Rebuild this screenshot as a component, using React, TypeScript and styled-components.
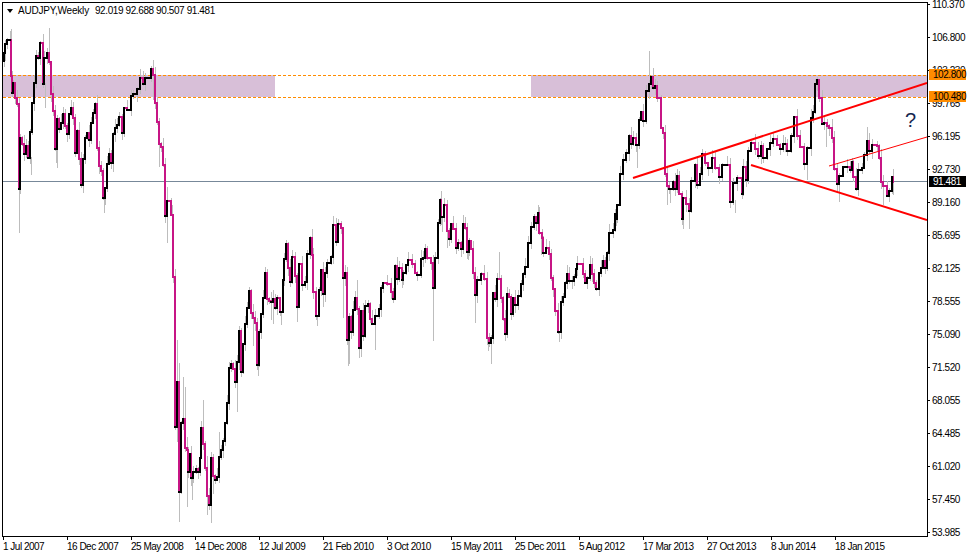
import React from "react";
import styled, { createGlobalStyle } from "styled-components";

const GlobalStyle = createGlobalStyle`
  html, body {
    margin: 0;
    background: #ffffff;
  }
`;

// close levels read off the chart, grouped by the crop they were measured in
type Point = [number, number];
interface Segment {
  ox: number;
  oy: number;
  pts: Point[];
}

const segments: Segment[] = [
  {
    ox: 0,
    oy: 0,
    pts: [
      [8, 180], [8, 155], [14, 130], [22, 118], [30, 118], [32, 225], [35, 275], [40, 245], [46, 290], [52, 310],
      [56, 565], [61, 410], [67, 430], [73, 460], [78, 435], [84, 470], [90, 392], [96, 305], [102, 245], [108, 165],
      [114, 172], [120, 125], [128, 248], [133, 170], [140, 155], [146, 182], [152, 280], [158, 330], [164, 445],
      [170, 355], [176, 385], [184, 365], [190, 338], [196, 375], [202, 398], [208, 340], [214, 320], [220, 350],
      [226, 455], [232, 390], [238, 475], [244, 553], [250, 475], [256, 410], [262, 395], [268, 418], [274, 365],
      [280, 335], [286, 310], [292, 440], [298, 495], [304, 510], [310, 592], [316, 560], [322, 488], [328, 458],
      [334, 485], [338, 400], [344, 380], [352, 372], [358, 348], [366, 395], [372, 322], [380, 328], [392, 285],
      [400, 278], [412, 265], [420, 232], [428, 250], [436, 232], [452, 203], [458, 222], [465, 305], [470, 362],
      [476, 428], [482, 438], [488, 492], [494, 645], [500, 600], [512, 642], [518, 828],
    ],
  },
  {
    ox: 0,
    oy: 274,
    pts: [
      [524, 455], [530, 322], [536, 650], [542, 445], [550, 432], [554, 520], [560, 525], [564, 592], [570, 538],
      [574, 610], [580, 592], [588, 582], [594, 590], [600, 550], [604, 460], [610, 508], [616, 578], [622, 662],
      [628, 690], [634, 550], [640, 602], [646, 615], [652, 605], [658, 545], [664, 525], [668, 497], [676, 445],
      [682, 385], [688, 280], [694, 268], [700, 282], [706, 322], [712, 260], [718, 168], [724, 292], [730, 208],
      [736, 148], [742, 98], [748, 48], [752, 115], [758, 130], [764, 145], [770, 270], [776, 172], [784, 118],
      [790, 70], [796, -5], [800, 72], [806, 78], [812, 82], [818, 72], [826, 98], [832, 70], [840, 112], [848, 15],
    ],
  },
  {
    ox: 0,
    oy: 0,
    pts: [
      [852, 775], [858, 730], [864, 800], [870, 842], [876, 768], [884, 825], [890, 917], [896, 790], [906, 852],
      [916, 844], [922, 760], [930, 710], [936, 762], [940, 872], [948, 944], [956, 867],
    ],
  },
  {
    ox: 320,
    oy: 140,
    pts: [
      [2, 388], [8, 458], [14, 395], [22, 367], [32, 347], [40, 252], [48, 302], [54, 248], [62, 260], [70, 412],
      [76, 395], [80, 598], [86, 528], [92, 572], [98, 508], [106, 472], [112, 505], [118, 622], [124, 510], [130, 585],
      [136, 495], [144, 490], [150, 535], [156, 548], [166, 525], [176, 505], [184, 442], [190, 425], [200, 430],
      [212, 452], [218, 475], [224, 375], [230, 413], [238, 382], [245, 418], [250, 395], [258, 372], [265, 358],
      [275, 370], [285, 395], [292, 402], [302, 355], [310, 350], [316, 325], [322, 352], [332, 365], [340, 442],
      [346, 352], [354, 245], [360, 178], [364, 228], [372, 192], [380, 270], [386, 295], [392, 248], [400, 265],
      [408, 320], [415, 307], [422, 325], [430, 250], [436, 262], [442, 332], [448, 300], [454, 325], [460, 395],
      [466, 462], [472, 418], [482, 398], [492, 415], [500, 592], [506, 605], [514, 590], [520, 455], [526, 475],
      [532, 415], [542, 470], [550, 535], [556, 578], [562, 458], [568, 468], [574, 518], [580, 472], [586, 492],
      [594, 465], [604, 428], [610, 400], [616, 378], [624, 305], [634, 257], [642, 228], [648, 245], [654, 215],
      [658, 275], [665, 290], [670, 335], [678, 320], [686, 338], [692, 412], [698, 445], [705, 510], [715, 572],
      [722, 482], [730, 468], [736, 425], [742, 400], [748, 420], [755, 420], [762, 408], [768, 385], [772, 368],
      [788, 398], [795, 425], [802, 412], [810, 372], [815, 400], [822, 425], [828, 445], [836, 395],
    ],
  },
  {
    ox: 600,
    oy: 40,
    pts: [
      [2, 680], [8, 660], [14, 680], [20, 635], [26, 575], [38, 568], [44, 518], [48, 535], [52, 492], [60, 400],
      [70, 358], [78, 335], [86, 285], [92, 310], [100, 290], [108, 312], [116, 238], [122, 212], [130, 240], [138, 150],
      [146, 130], [152, 108], [158, 140], [165, 135], [172, 172], [182, 262], [190, 275], [195, 400], [202, 435],
      [208, 445], [218, 422], [224, 445], [232, 405], [238, 460], [245, 535], [250, 470], [258, 490], [266, 510],
      [272, 420], [285, 372], [292, 432], [300, 400], [306, 340], [315, 365], [325, 382], [335, 350], [345, 380],
      [358, 408], [365, 372], [380, 372], [390, 482], [400, 425], [410, 412], [425, 458], [430, 378], [437, 418],
      [445, 330], [452, 305], [465, 325], [475, 345], [482, 315], [490, 350], [500, 325], [510, 305], [520, 295],
      [530, 312], [540, 325], [548, 308], [555, 308], [562, 330], [572, 285], [582, 228], [590, 285], [600, 318],
      [612, 368], [622, 322], [632, 232], [640, 212], [645, 130], [650, 118], [656, 172], [665, 250], [672, 245],
      [680, 255], [688, 262], [696, 292], [703, 385], [710, 428], [718, 405], [728, 378], [740, 378], [750, 388],
      [755, 362], [760, 408], [768, 445], [775, 388], [785, 380], [792, 342], [800, 300], [808, 330], [815, 312],
      [830, 315], [838, 350], [844, 422], [850, 435], [860, 465], [868, 450], [875, 408], [880, 424],
    ],
  },
];

// the long wicks that stand out: x, top, bottom
const longWicks: number[][] = [
  [11, 29, 50], [19, 120, 233], [31, 157, 175], [45, 83, 108], [49, 28, 55], [56, 148, 163], [57, 148, 168],
  [104, 197, 213], [113, 162, 172], [153, 60, 100], [159, 135, 167], [167, 187, 243], [172, 205, 267],
  [177, 340, 442], [179, 363, 522], [183, 377, 420], [185, 387, 417], [187, 437, 507], [192, 474, 500],
  [203, 400, 427], [207, 456, 515], [211, 504, 523], [213, 457, 494], [219, 432, 467], [237, 381, 412],
  [253, 317, 346], [258, 364, 376], [271, 297, 320], [273, 290, 324], [281, 311, 325], [297, 306, 322],
  [317, 315, 326], [323, 293, 307], [343, 277, 318], [348, 340, 366], [349, 330, 364], [357, 280, 297],
  [359, 347, 358], [361, 347, 357], [375, 323, 350], [433, 287, 341], [441, 195, 215], [442, 217, 232],
  [447, 230, 248], [468, 250, 260], [475, 294, 323], [488, 342, 351], [491, 342, 364], [499, 252, 278],
  [505, 332, 339], [541, 237, 255], [559, 331, 342], [637, 144, 168], [649, 51, 76], [667, 185, 205],
  [670, 190, 203], [683, 215, 229], [689, 212, 229], [735, 200, 213], [807, 163, 180], [826, 127, 147],
  [839, 183, 202], [867, 127, 142], [883, 185, 205], [889, 195, 202], [893, 170, 195],
];

const bodyPaths = () => {
  let black = "";
  let pink = "";
  let wicks = "";
  let prevX = 0;
  let prevY = 0;
  let first = true;
  let n = 0;
  segments.forEach((seg) => {
    seg.pts.forEach(([zx, zy]) => {
      // readings are bar centres, bodies are 2px wide
      const x = Math.max(Math.round(seg.ox + zx / 3) - 1, 3);
      const y = Math.round(seg.oy + zy / 3);
      if (first) {
        prevX = x;
        prevY = y;
        first = false;
      }
      const top = Math.min(prevY, y);
      const h = Math.abs(prevY - y) + 2;
      const bar = `M${x} ${top}h2v${h}h-2zM${prevX} ${prevY}h${Math.max(x - prevX, 0)}v2h${-Math.max(x - prevX, 0)}z`;
      if (y <= prevY) black += bar;
      else pink += bar;
      n += 1;
      const up = (n * 7) % 9;
      const down = (n * 5) % 8;
      wicks += `M${x + 1} ${top - up}V${top + h + down}`;
      prevX = x;
      prevY = y;
    });
  });
  longWicks.forEach(([x, a, b]) => {
    wicks += `M${x} ${a}V${b}`;
  });
  return { black, pink, wicks };
};

const { black, pink, wicks } = bodyPaths();

const prices = [
  "110.370", "106.800", "103.230", "99.765", "96.195", "92.730", "89.160", "85.695", "82.125",
  "78.555", "75.090", "71.520", "68.055", "64.485", "61.020", "57.450", "53.985",
];

const dates = [
  "1 Jul 2007", "16 Dec 2007", "25 May 2008", "14 Dec 2008", "12 Jul 2009", "21 Feb 2010", "3 Oct 2010",
  "15 May 2011", "25 Dec 2011", "5 Aug 2012", "17 Mar 2013", "27 Oct 2013", "8 Jun 2014", "18 Jan 2015",
];

const Page = styled.div`
  display: grid;
  grid-template-columns: 928px 39px;
  grid-template-rows: 537px 17px;
  width: 967px;
  height: 554px;
  overflow: hidden;
  background: #ffffff;
  color: #000000;
  font-family: "Liberation Sans", Arial, sans-serif;
  font-size: 10px;
  letter-spacing: -0.45px;
`;

const Plot = styled.div`
  position: relative;
  box-sizing: border-box;
  margin: 2px 0 0 2px;
  border: 1px solid #000000;
  width: 926px;
  height: 535px;
`;

const ChartSvg = styled.svg`
  display: block;
  width: 924px;
  height: 533px;
`;

const Legend = styled.div`
  position: absolute;
  top: 2px;
  left: 4px;
  display: flex;
  align-items: center;
  gap: 5px;
  line-height: 12px;
  white-space: nowrap;
`;

const Caret = styled.span`
  width: 0;
  height: 0;
  border-left: 3.5px solid transparent;
  border-right: 3.5px solid transparent;
  border-top: 4px solid #000000;
`;

const Pair = styled.span`
  letter-spacing: -0.2px;
`;

const Quotes = styled.span`
  margin-left: 6px;
  letter-spacing: -0.4px;
`;

const QuestionMark = styled.span`
  position: absolute;
  top: 106px;
  left: 902px;
  font-size: 20px;
  line-height: 22px;
  letter-spacing: 0;
  color: #16264f;
`;

const PriceAxis = styled.div`
  position: relative;
  display: flex;
  flex-direction: column;
  gap: 24px;
`;

const PriceLabel = styled.div`
  position: relative;
  height: 9px;
  line-height: 9px;
  padding-left: 4px;

  &::before {
    content: "";
    position: absolute;
    left: -1px;
    top: 4px;
    width: 3px;
    height: 1px;
    background: #000000;
  }
`;

const PriceTag = styled.div<{ $y: number; $dark?: boolean }>`
  position: absolute;
  top: ${(p) => p.$y}px;
  left: 1px;
  width: 37px;
  height: 11px;
  line-height: 11px;
  padding-left: 4px;
  box-sizing: border-box;
  background: ${(p) => (p.$dark ? "#000000" : "#ff8c00")};
  color: ${(p) => (p.$dark ? "#ffffff" : "#000000")};
`;

const DateAxis = styled.div`
  grid-column: 1 / 3;
  display: flex;
  padding-left: 3px;
`;

const DateLabel = styled.div`
  position: relative;
  flex: 0 0 64px;
  padding-top: 4px;
  line-height: 12px;
  white-space: nowrap;
  letter-spacing: -0.5px;

  &::before {
    content: "";
    position: absolute;
    left: 0;
    top: 0;
    width: 1px;
    height: 3px;
    background: #000000;
  }
`;

export default function App() {
  return (
    <>
      <GlobalStyle />
      <Page>
        <Plot>
          <ChartSvg viewBox="3 3 924 533">
            <rect x="3" y="75" width="272" height="22" fill="#d8bfd8" />
            <rect x="531" y="75" width="396" height="22" fill="#d8bfd8" />
            <g stroke="#ff8c00" strokeWidth="1" strokeDasharray="3 2" shapeRendering="crispEdges">
              <line x1="3" y1="75.5" x2="927" y2="75.5" />
              <line x1="3" y1="97.5" x2="927" y2="97.5" />
            </g>
            <line x1="3" y1="181.5" x2="927" y2="181.5" stroke="#778899" shapeRendering="crispEdges" />
            <path d={wicks} stroke="#bdbdbd" strokeWidth="1" fill="none" transform="translate(0.5 0)" shapeRendering="crispEdges" />
            <path d={pink} fill="#c71585" shapeRendering="crispEdges" />
            <path d={black} fill="#000000" shapeRendering="crispEdges" />
            <g stroke="#ff0000" fill="none">
              <line x1="633" y1="178" x2="927" y2="83" strokeWidth="2" />
              <line x1="751" y1="165" x2="927" y2="220" strokeWidth="2" />
              <line x1="829" y1="166" x2="927" y2="137" strokeWidth="1" />
            </g>
          </ChartSvg>
          <Legend>
            <Caret />
            <span>
              <Pair>AUDJPY,Weekly</Pair>
              <Quotes>92.019 92.688 90.507 91.481</Quotes>
            </span>
          </Legend>
          <QuestionMark>?</QuestionMark>
        </Plot>
        <PriceAxis>
          {prices.map((price) => (
            <PriceLabel key={price}>{price}</PriceLabel>
          ))}
          <PriceTag $y={69}>102.800</PriceTag>
          <PriceTag $y={91}>100.480</PriceTag>
          <PriceTag $y={176} $dark>91.481</PriceTag>
        </PriceAxis>
        <DateAxis>
          {dates.map((date) => (
            <DateLabel key={date}>{date}</DateLabel>
          ))}
        </DateAxis>
      </Page>
    </>
  );
}
